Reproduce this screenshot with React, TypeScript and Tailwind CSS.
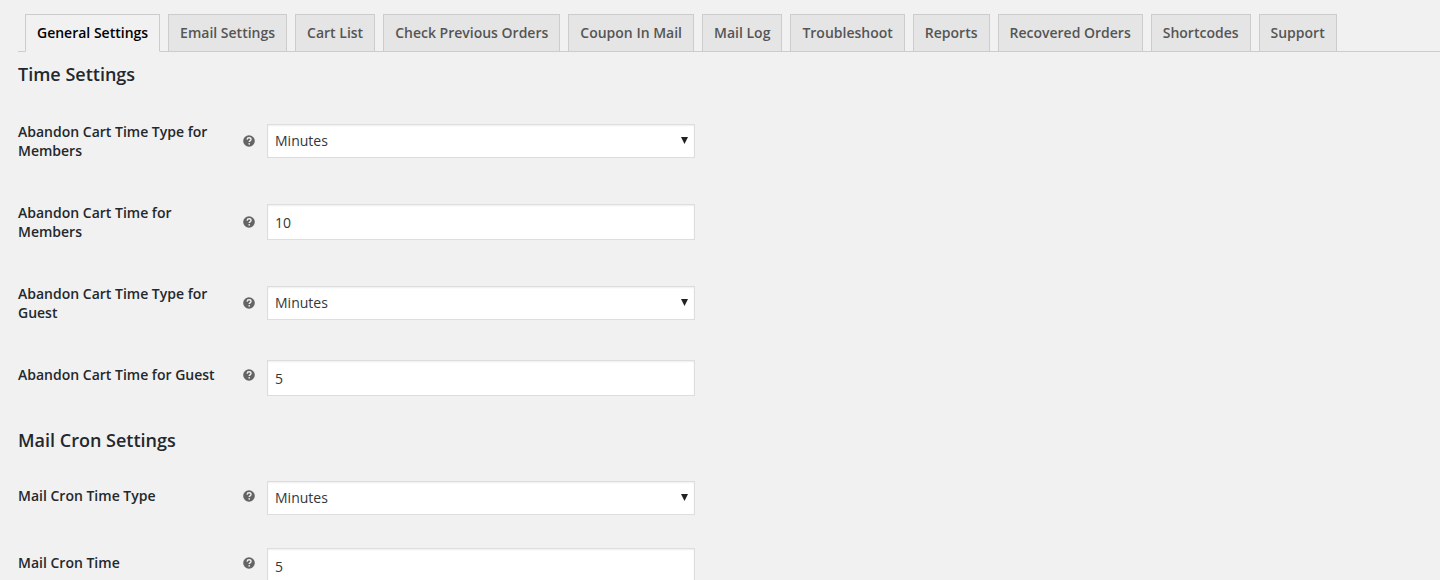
import { useState } from "react";

type Field = {
  id: string;
  label: string;
  kind: "select" | "text";
  value: string;
};

type Section = { title: string; headingClass: string; fields: Field[] };

const tabs = [
  "General Settings",
  "Email Settings",
  "Cart List",
  "Check Previous Orders",
  "Coupon In Mail",
  "Mail Log",
  "Troubleshoot",
  "Reports",
  "Recovered Orders",
  "Shortcodes",
  "Support",
];

const sections: Section[] = [
  {
    title: "Time Settings",
    headingClass: "pt-2.5 pb-3.5",
    fields: [
      { id: "member-type", label: "Abandon Cart Time Type for Members", kind: "select", value: "Minutes" },
      { id: "member-time", label: "Abandon Cart Time for Members", kind: "text", value: "10" },
      { id: "guest-type", label: "Abandon Cart Time Type for Guest", kind: "select", value: "Minutes" },
      { id: "guest-time", label: "Abandon Cart Time for Guest", kind: "text", value: "5" },
    ],
  },
  {
    title: "Mail Cron Settings",
    headingClass: "pt-4 pb-3",
    fields: [
      { id: "cron-type", label: "Mail Cron Time Type", kind: "select", value: "Minutes" },
      { id: "cron-time", label: "Mail Cron Time", kind: "text", value: "5" },
    ],
  },
];

function HelpIcon() {
  return (
    <svg viewBox="0 0 12 12" className="size-3 shrink-0" aria-hidden="true">
      <circle cx="6" cy="6" r="5.8" fill="#646464" />
      <path
        d="M4.1 4.6C4.2 3.4 5 2.8 6.1 2.8c1.1 0 1.9.6 1.9 1.6 0 1.5-1.8 1.4-1.8 2.7"
        fill="none"
        stroke="#f1f1f1"
        strokeWidth="1.4"
      />
      <circle cx="6.2" cy="8.8" r="0.85" fill="#f1f1f1" />
    </svg>
  );
}

function FieldRow({ field }: { field: Field }) {
  const control =
    "w-full border border-[#ddd] bg-white px-[7px] text-sm text-[#32373c] shadow-[inset_0_1px_2px_rgba(0,0,0,0.07)] outline-none";
  return (
    <div className="grid grid-cols-[237px_minmax(0,428px)] gap-x-3 pt-[17px] pb-4">
      <div className="flex items-center justify-between gap-4 self-start py-[5px]">
        <label htmlFor={field.id} className="max-w-[204px] text-sm leading-[19px] font-semibold text-[#23282d]">
          {field.label}
        </label>
        <HelpIcon />
      </div>
      {field.kind === "select" ? (
        <div className="relative self-center">
          <select id={field.id} defaultValue={field.value} className={`${control} block h-[34px] appearance-none`}>
            <option>Minutes</option>
            <option>Hours</option>
            <option>Days</option>
          </select>
          <svg viewBox="0 0 7 7" className="pointer-events-none absolute top-[13px] right-[7px] size-[7px]" aria-hidden="true">
            <path d="M0 0h7L3.5 7z" fill="#222" />
          </svg>
        </div>
      ) : (
        <input id={field.id} type="text" defaultValue={field.value} className={`${control} h-9 self-center`} />
      )}
    </div>
  );
}

export default function App() {
  const [active, setActive] = useState(tabs[0]);
  return (
    <main className="min-h-screen bg-[#f1f1f1] pt-3.5 pl-[18px] font-['Open_Sans','Noto_Sans',sans-serif]">
      <nav className="flex gap-2 border-b border-[#ccc] pl-[7px]">
        {tabs.map((tab) => (
          <button
            key={tab}
            type="button"
            onClick={() => setActive(tab)}
            className={
              tab === active
                ? "-mb-px h-[38px] border border-[#ccc] border-b-[#f1f1f1] bg-[#f1f1f1] px-[11px] text-sm font-semibold whitespace-nowrap text-black"
                : "h-[37px] border border-b-0 border-[#ccc] bg-[#e5e5e5] px-[11px] text-sm font-semibold whitespace-nowrap text-[#555]"
            }
          >
            {tab}
          </button>
        ))}
      </nav>
      {sections.map((section) => (
        <section key={section.title}>
          <h2 className={`text-lg leading-6 font-semibold text-[#23282d] ${section.headingClass}`}>{section.title}</h2>
          {section.fields.map((field) => (
            <FieldRow key={field.id} field={field} />
          ))}
        </section>
      ))}
    </main>
  );
}
